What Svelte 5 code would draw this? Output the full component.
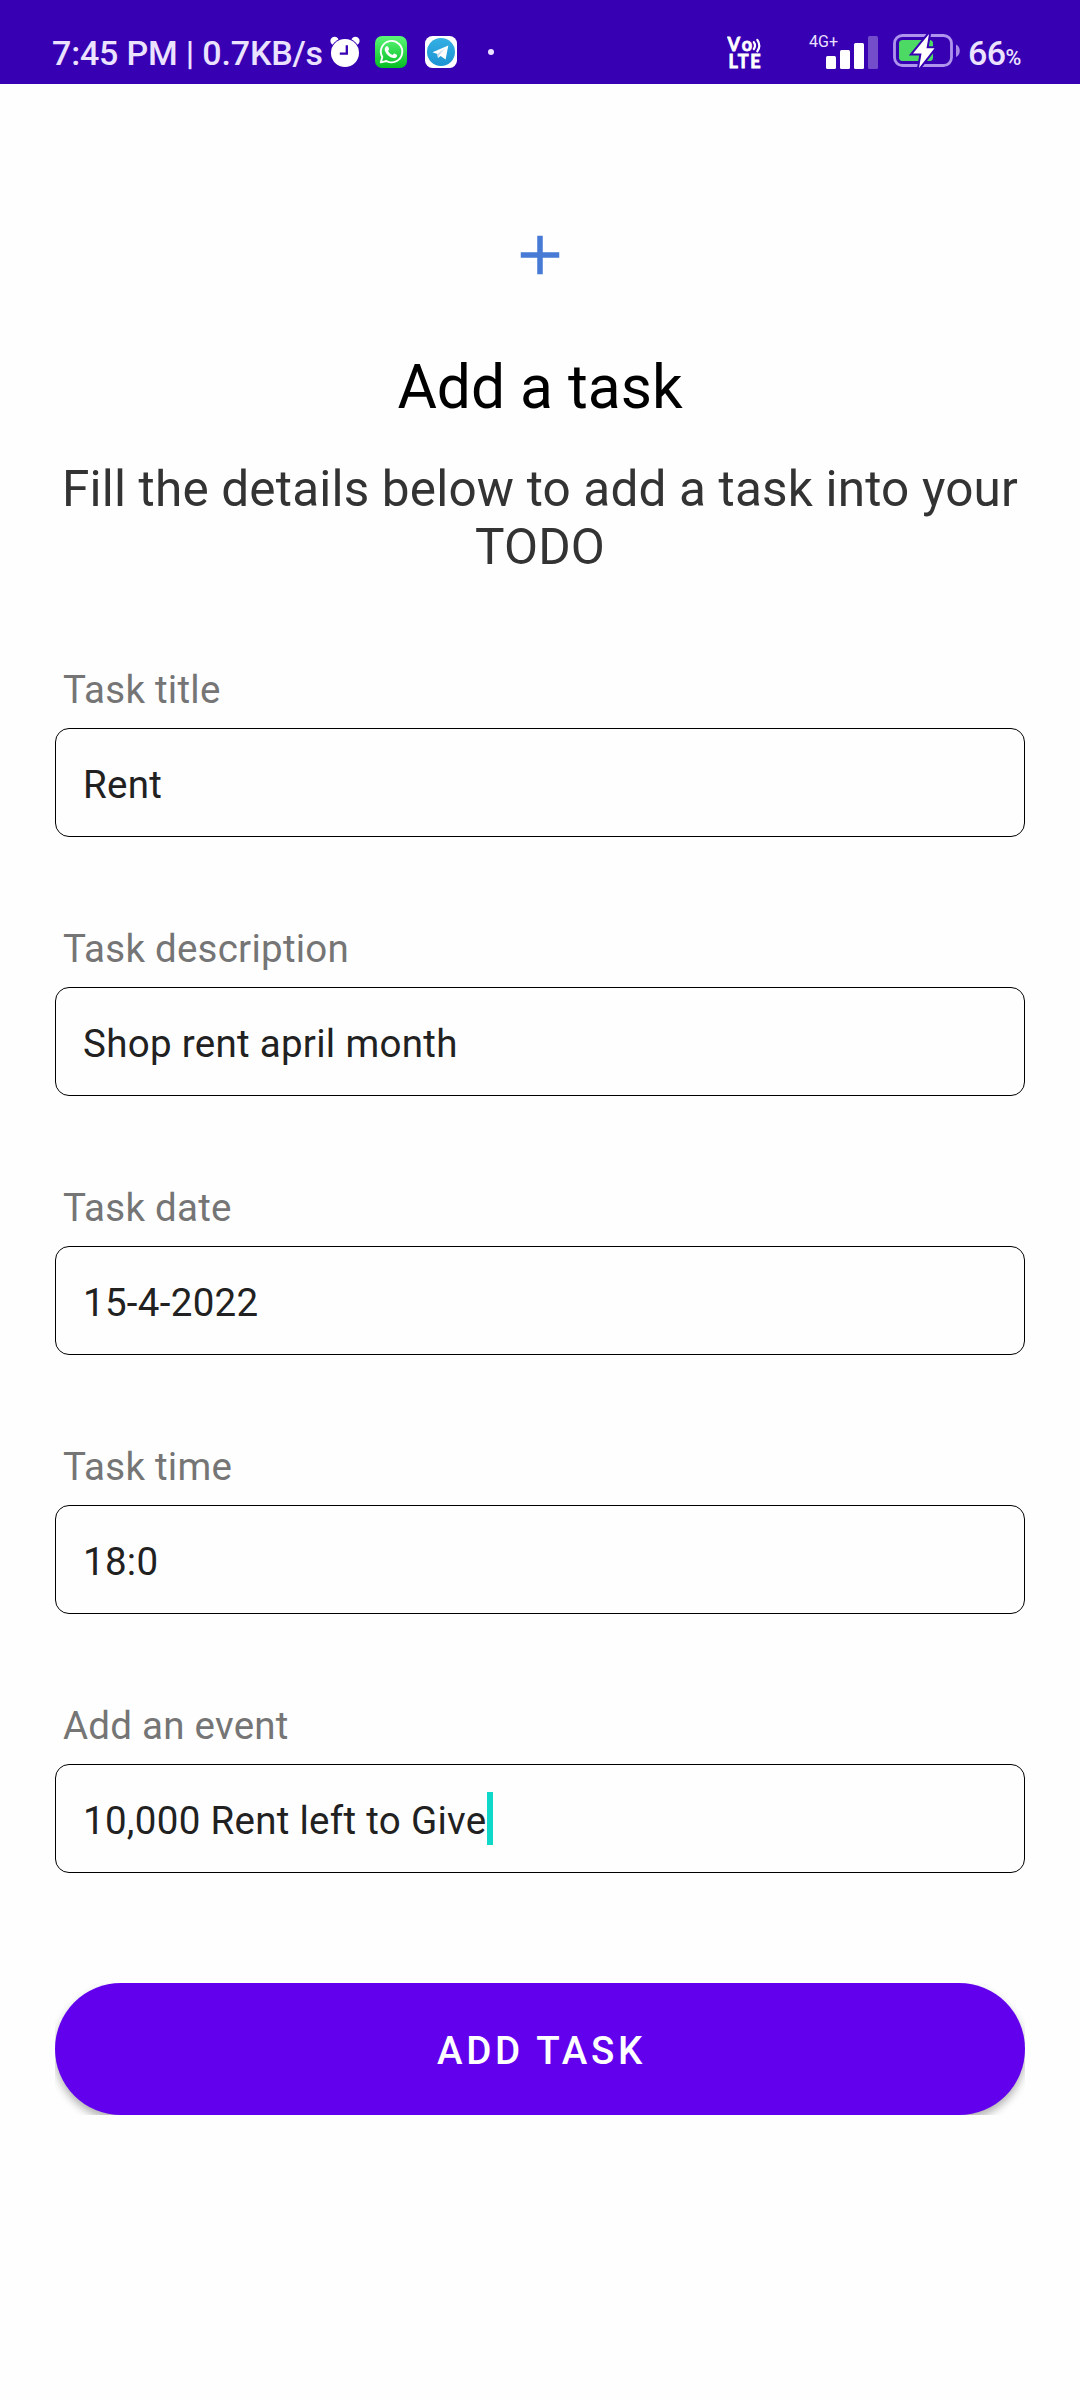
<script>
  const fields = [
    { id: 'title', label: 'Task title', value: 'Rent' },
    { id: 'description', label: 'Task description', value: 'Shop rent april month' },
    { id: 'date', label: 'Task date', value: '15-4-2022' },
    { id: 'time', label: 'Task time', value: '18:0' },
    { id: 'event', label: 'Add an event', value: '10,000 Rent left to Give', focused: true }
  ];
</script>

<div class="screen">
  <header class="status">
    <div class="group">
      <span class="clock">7:45 PM | 0.7KB/s</span>
      <svg class="alarm" width="30" height="32" viewBox="0 0 30 32">
        <circle cx="4.6" cy="5" r="4.2" fill="#fff" />
        <circle cx="25.4" cy="5" r="4.2" fill="#fff" />
        <circle cx="15" cy="17" r="15" fill="#3700b3" />
        <circle cx="15" cy="17" r="14" fill="#fff" />
        <path d="M16.8 9.2V17.6H9.8" fill="none" stroke="#3700b3" stroke-width="2.3" />
      </svg>
      <svg class="whatsapp" width="32" height="32" viewBox="0 0 32 32">
        <defs>
          <linearGradient id="wa" x1="0" y1="0" x2="0" y2="1">
            <stop offset="0" stop-color="#5cf777" />
            <stop offset="1" stop-color="#06bd22" />
          </linearGradient>
        </defs>
        <rect width="32" height="32" rx="7" fill="url(#wa)" />
        <path d="M5.8 26.4l1.5-5.4a10.7 10.7 0 1 1 4.1 4z" fill="none" stroke="#fff" stroke-width="1.9" stroke-linejoin="round" />
        <path d="M12 10.2c.6 0 .9 0 1.1.6l1 2.3c.2.5-.9 1.4-1 1.8.9 1.9 2.4 3.2 4.5 4.1.5-.2 1.2-1.6 1.8-1.4l2.4 1.2c.5.3.3 1.1.1 1.7-.5 1.2-2.2 1.8-3.4 1.6-4.2-.8-7.1-3.5-8.5-7.1-.7-2.1.3-4.8 2-4.8z" fill="#fff" />
      </svg>
      <svg class="telegram" width="32" height="32" viewBox="0 0 32 32">
        <defs>
          <linearGradient id="tg" x1="0" y1="0" x2="0" y2="1">
            <stop offset="0" stop-color="#34b0e4" />
            <stop offset="1" stop-color="#1d93d2" />
          </linearGradient>
        </defs>
        <rect width="32" height="32" rx="7.5" fill="#fff" />
        <circle cx="16" cy="16" r="14" fill="url(#tg)" />
        <path d="M7.5 16.3L23.3 9.6 20.6 23.4 15.6 19.9 13 22 12.3 18z" fill="#fff" />
        <path d="M12.3 18L20.3 12.2 14.2 19 13 22z" fill="#c3d9ea" />
      </svg>
      <span class="dot"></span>
    </div>
    <div class="group">
      <svg class="volte" width="36" height="38" viewBox="0 -4 36 38">
        <g fill="#fff" stroke="#fff" stroke-width=".8">
          <text x="0.5" y="12.6" class="badge" textLength="24.5">Vo</text>
          <text x="1.5" y="30.3" class="badge" textLength="32">LTE</text>
        </g>
        <path d="M26.8 4.2q2.4 3.4 0 6.800M30.3 1.8q4 5.8 0 11.6" fill="none" stroke="#fff" stroke-width="2.2" stroke-linecap="round" />
      </svg>
      <svg class="signal" width="70" height="38" viewBox="0 -2 70 38">
        <text x="0" y="12.5" class="net" textLength="29">4G+</text>
        <rect x="17" y="22" width="10" height="13" rx="1.5" fill="#fff" />
        <rect x="31" y="16" width="10" height="19" rx="1.5" fill="#fff" />
        <rect x="45" y="9" width="10" height="26" rx="1.5" fill="#fff" />
        <rect x="59" y="2" width="10" height="33" rx="1.5" fill="#fff" opacity=".3" />
      </svg>
      <svg class="battery" width="68" height="34" viewBox="0 0 68 34">
        <rect x="1.5" y="1.5" width="57" height="30" rx="8" fill="none" stroke="#af94ee" stroke-width="2.8" />
        <rect x="6" y="6" width="34" height="21" rx="3.5" fill="#4cd964" />
        <path d="M63 10.5c5 2 5 10.5 0 12.5z" fill="#a98ae6" />
        <path d="M36 0L20 19.5H28.5L26 34 41.5 14.3H33.5z" fill="#fff" stroke="#3700b3" stroke-width="4" paint-order="stroke" />
      </svg>
      <span class="percent">66<small>%</small></span>
    </div>
  </header>

  <main>
    <svg class="plus" width="66" height="66" viewBox="0 0 24 24">
      <path d="M19 13h-6v6h-2v-6H5v-2h6V5h2v6h6v2z" fill="#467ad4" />
    </svg>
    <h1>Add a task</h1>
    <p>Fill the details below to add a task into your TODO</p>

    <form>
      {#each fields as field (field.id)}
        <div class="field">
          <span class="label">{field.label}</span>
          <div class="box">
            <span class="value">{field.value}</span>{#if field.focused}<i class="caret"></i>{/if}
          </div>
        </div>
      {/each}
      <div class="action">
        <button type="button">ADD TASK</button>
      </div>
    </form>
  </main>
</div>

<style>
  :global(body) {
    margin: 0;
    background: #fefefe;
  }
  .screen {
    width: 1080px;
    height: 2400px;
    overflow: hidden;
    background: #fefefe;
    font-family: Roboto, sans-serif;
  }
  .status {
    box-sizing: border-box;
    height: 84px;
    padding: 34px 58px 0 52px;
    display: flex;
    justify-content: space-between;
    background: #3700b3;
    color: #ebe2ff;
  }
  .group {
    display: flex;
    align-items: flex-start;
  }
  .clock {
    width: 278px;
    margin-top: -1px;
    font-size: 34px;
    line-height: 40px;
    font-weight: 500;
    letter-spacing: -0.18px;
    white-space: nowrap;
  }
  .alarm,
  .whatsapp,
  .telegram {
    margin-top: 2px;
  }
  .whatsapp {
    margin-left: 15px;
  }
  .telegram {
    margin-left: 18px;
  }
  .dot {
    width: 6px;
    height: 6px;
    margin: 15px 0 0 31px;
    border-radius: 50%;
    background: #ebe2ff;
  }
  .badge {
    font: 700 18px Lato, sans-serif;
  }
  .signal {
    margin: -2px 0 0 46px;
  }
  .net {
    font: 400 16px Roboto, sans-serif;
    fill: #ebe2ff;
  }
  .battery {
    margin-left: 14px;
  }
  .percent {
    width: 54px;
    margin: -1px 0 0 7px;
    font-size: 34px;
    line-height: 40px;
    font-weight: 500;
    letter-spacing: -0.6px;
    white-space: nowrap;
  }
  small {
    font-size: 21.5px;
  }
  main {
    display: flex;
    flex-direction: column;
    align-items: center;
    padding: 138px 55px 0;
  }
  .plus {
    display: block;
  }
  h1 {
    margin: 64px 0 0;
    font-size: 60.5px;
    line-height: 71px;
    font-weight: 400;
    color: #000;
  }
  p {
    margin: 37px 0 91px;
    font-size: 49.5px;
    line-height: 58px;
    letter-spacing: 0.17px;
    text-align: center;
    color: #333;
  }
  form {
    width: 970px;
  }
  .field {
    display: flex;
    flex-direction: column;
    gap: 16px;
    margin-bottom: 89px;
  }
  .label {
    padding-left: 8px;
    font-size: 38.5px;
    line-height: 45px;
    letter-spacing: 0.25px;
    color: #757575;
  }
  .box {
    box-sizing: border-box;
    height: 109px;
    padding: 0 27px;
    display: flex;
    align-items: center;
    border: 1px solid #000;
    border-radius: 14px;
    font-size: 38.5px;
    line-height: 45px;
    letter-spacing: 0.3px;
    color: #212121;
  }
  .value {
    padding-top: 3px;
  }
  .caret {
    width: 6px;
    height: 53px;
    background: #0fd8c8;
  }
  .field:nth-last-child(2) {
    margin-bottom: 110px;
  }
  .action {
    height: 132px;
    overflow: hidden;
  }
  button {
    display: block;
    width: 970px;
    height: 132px;
    padding: 2px 0 0 3px;
    border: 0;
    border-radius: 66px;
    background: #6200ee;
    box-shadow: 0 5px 8px rgba(0, 0, 0, 0.3);
    color: #fff;
    font: 500 38.5px/45px Roboto, sans-serif;
    letter-spacing: 3.7px;
  }
</style>
